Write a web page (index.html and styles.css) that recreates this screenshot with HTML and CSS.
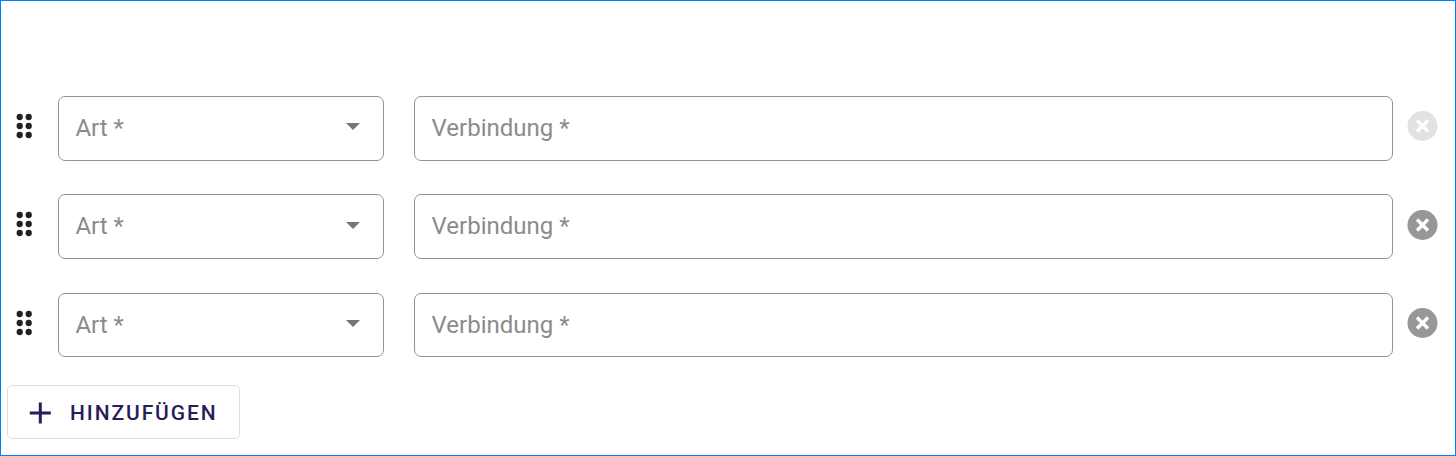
FILE: index.html
```html
<!DOCTYPE html>
<html lang="de">
<head>
<meta charset="utf-8">
<title>Verbindungen</title>
<link rel="stylesheet" href="styles.css">
</head>
<body>
<svg class="defs" width="0" height="0">
  <symbol id="grip" viewBox="0 0 18 26"><g fill="#212121"><circle cx="4.7" cy="4" r="3.15"/><circle cx="13.7" cy="4" r="3.15"/><circle cx="4.7" cy="13" r="3.15"/><circle cx="13.7" cy="13" r="3.15"/><circle cx="4.7" cy="22" r="3.15"/><circle cx="13.7" cy="22" r="3.15"/></g></symbol>
  <symbol id="remove" viewBox="0 0 31 30"><circle cx="15.5" cy="15" r="15" fill="currentColor"/><path d="M10 9.5l11 11M21 9.5L10 20.5" stroke="#fff" stroke-width="3.4"/></symbol>
</svg>
<main class="panel">
  <div class="rows">
    <div class="row">
      <svg class="grip"><use href="#grip"/></svg>
      <div class="field select"><span>Art *</span><svg class="arrow" viewBox="0 0 14 7"><path d="M0 0h14L7 7z"/></svg></div>
      <div class="field connection"><span>Verbindung *</span></div>
      <svg class="remove disabled"><use href="#remove"/></svg>
    </div>
    <div class="row second">
      <svg class="grip"><use href="#grip"/></svg>
      <div class="field select"><span>Art *</span><svg class="arrow" viewBox="0 0 14 7"><path d="M0 0h14L7 7z"/></svg></div>
      <div class="field connection"><span>Verbindung *</span></div>
      <svg class="remove"><use href="#remove"/></svg>
    </div>
    <div class="row third">
      <svg class="grip"><use href="#grip"/></svg>
      <div class="field select"><span>Art *</span><svg class="arrow" viewBox="0 0 14 7"><path d="M0 0h14L7 7z"/></svg></div>
      <div class="field connection"><span>Verbindung *</span></div>
      <svg class="remove"><use href="#remove"/></svg>
    </div>
  </div>
  <button class="add"><svg class="plus" viewBox="0 0 22 22"><path d="M11.3 .5v21M.8 11h21"/></svg><span>HINZUFÜGEN</span></button>
</main>
</body>
</html>
```
FILE: styles.css
```css
* { box-sizing: border-box; }
body { margin: 0; background: #fff; font-family: Roboto, sans-serif; }
.defs { display: none; }
.panel { width: 1456px; height: 456px; border: 1px solid #007dfc; padding: 95px 0 0 6px; }
.row { display: flex; height: 65px; margin-bottom: 33px; }
.row.second { margin-bottom: 34px; }
.row.third { height: 64px; margin-bottom: 28px; }
.grip { width: 18px; height: 26px; margin: 17px 25px 0 8px; flex: none; }
.field { display: flex; align-items: flex-start; border: 1px solid #939393; border-radius: 7px; padding: 17px 17px 0 16.4px; color: #8b8b8b; font-size: 24px; line-height: 28px; }
.select { width: 326px; margin-right: 30px; justify-content: space-between; }
.connection { width: 979px; margin-right: 14px; padding-left: 16.6px; }
.arrow { width: 14px; height: 7px; margin: 9px 6px 0 0; fill: #757575; }
.second .arrow { margin-top: 10px; }
.remove { width: 31px; height: 30px; margin-top: 15px; color: #979797; flex: none; }
.second .remove { margin-top: 16px; }
.remove.disabled { color: #e2e2e2; }
.add { display: flex; align-items: center; width: 233px; height: 54px; padding: 2px 0 0 21px; border: 1px solid #dedede; border-radius: 5px; background: #fff; color: #261d59; font: 500 21px/26px Roboto, sans-serif; letter-spacing: 1.9px; }
.plus { width: 22px; height: 22px; margin-right: 19px; stroke: currentColor; stroke-width: 3; }
```
